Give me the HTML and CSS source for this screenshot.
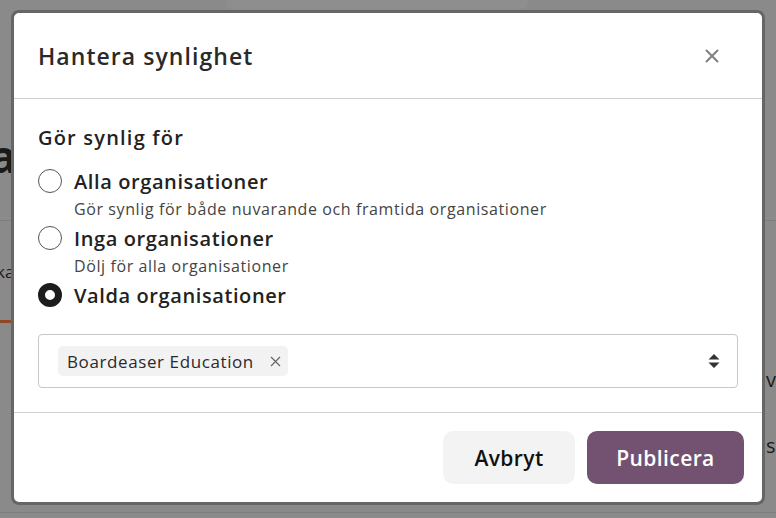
FILE: index.html
```html
<!DOCTYPE html>
<html lang="sv">
<head>
<meta charset="utf-8">
<link rel="stylesheet" href="styles.css">
</head>
<body>
<div class="page">
  <div class="bg-top"></div>
  <div class="bg-line l1"></div>
  <div class="bg-line l2"></div>
  <div class="bg-big">a</div>
  <div class="bg-small">ka</div>
  <div class="bg-orange"></div>
  <div class="bg-r1">v</div>
  <div class="bg-r2">s</div>
</div>
<div class="modal">
  <div class="modal-header">
    <h2 class="title">Hantera synlighet</h2>
    <button class="close" aria-label="Stäng">
      <svg width="14" height="14" viewBox="0 0 14 14"><path d="M1.5 1.5 L12.5 12.5 M12.5 1.5 L1.5 12.5" stroke="#808080" stroke-width="2" stroke-linecap="round"/></svg>
    </button>
  </div>
  <div class="modal-body">
    <div class="section-label">Gör synlig för</div>
    <div class="options">
      <div class="option">
        <span class="radio"></span>
        <span class="opt-label">Alla organisationer</span>
      </div>
      <div class="desc">Gör synlig för både nuvarande och framtida organisationer</div>
      <div class="option">
        <span class="radio"></span>
        <span class="opt-label">Inga organisationer</span>
      </div>
      <div class="desc">Dölj för alla organisationer</div>
      <div class="option">
        <span class="radio checked"></span>
        <span class="opt-label">Valda organisationer</span>
      </div>
    </div>
    <div class="select">
      <span class="chip">Boardeaser Education
        <svg class="chip-x" width="11" height="11" viewBox="0 0 11 11"><path d="M1 1 L10 10 M10 1 L1 10" stroke="#666" stroke-width="1.2"/></svg>
      </span>
      <svg class="caret" width="12" height="16" viewBox="0 0 12 16"><path d="M6 1 L11.5 6.5 H0.5 Z M0.5 9.5 H11.5 L6 15 Z" fill="#333"/></svg>
    </div>
  </div>
  <div class="modal-footer">
    <button class="btn btn-cancel">Avbryt</button>
    <button class="btn btn-primary">Publicera</button>
  </div>
</div>
</body>
</html>
```
FILE: styles.css
```css
* { box-sizing: border-box; }
html, body { margin: 0; padding: 0; }
body {
  width: 776px;
  height: 518px;
  overflow: hidden;
  background: #8a8a8a;
  font-family: "Open Sans", Lato, sans-serif;
  color: #222;
  position: relative;
}
.page { position: absolute; inset: 0; }
.bg-top { position: absolute; left: 226px; top: 0; width: 302px; height: 9px; background: #8e8e8e; border-radius: 0 0 6px 6px; }
.bg-line { position: absolute; height: 1px; background: #7e7e7e; }
.l1 { left: 0; right: 0; top: 220px; }
.l2 { left: 0; right: 0; top: 512px; }
.bg-big { position: absolute; left: -10px; top: 126px; font-size: 44px; font-weight: 700; color: #1a1a1a; }
.bg-small { position: absolute; left: -4px; top: 260px; font-size: 17px; color: #1a1a1a; }
.bg-orange { position: absolute; left: 0; top: 320px; width: 12px; height: 3px; background: #8b4a24; }
.bg-r1 { position: absolute; left: 766px; top: 366px; font-size: 20px; color: #1a1a1a; }
.bg-r2 { position: absolute; left: 766px; top: 432px; font-size: 20px; color: #1a1a1a; }

.modal {
  position: absolute;
  left: 11px;
  top: 10px;
  width: 754px;
  height: 495px;
  background: #fff;
  border: 3px solid #666;
  border-radius: 8px;
  display: flex;
  flex-direction: column;
}
.modal-header {
  height: 86px;
  border-bottom: 1px solid #d0d0d0;
  display: flex;
  align-items: center;
  justify-content: space-between;
  padding: 0 43px 0 24px;
}
.title { margin: 0; font-size: 23px; font-weight: 600; letter-spacing: 1.05px; color: #2a2a2a; }
.close { border: 0; background: none; padding: 0; display: flex; }
.modal-body {
  padding: 25px 24px 0 24px;
  height: 314px;
  border-bottom: 1px solid #d0d0d0;
}
.section-label { font-size: 20px; font-weight: 600; letter-spacing: 1.2px; color: #222; line-height: 28px; }
.options { margin-top: 13px; }
.option { display: flex; align-items: center; gap: 12px; height: 32px; }
.radio {
  width: 24px; height: 24px; border-radius: 50%;
  border: 1.5px solid #555; background: #fff; flex: none;
}
.radio.checked { border: 7px solid #1d1d1d; }
.opt-label { font-size: 20px; font-weight: 600; letter-spacing: 0.6px; color: #222; }
.desc { font-size: 16px; letter-spacing: 0.6px; color: #444; padding-left: 36px; height: 25px; line-height: 25px; }
.select {
  margin-top: 23px;
  height: 54px;
  border: 1px solid #c8c8c8;
  border-radius: 4px;
  display: flex;
  align-items: center;
  justify-content: space-between;
  padding: 0 17px 0 19px;
}
.chip {
  display: inline-flex; align-items: center; gap: 16px;
  background: #f2f2f2; border-radius: 5px;
  height: 30px; padding: 0 7px 0 9px;
  font-size: 17px; letter-spacing: 0.6px; color: #2a2a2a;
}
.modal-footer {
  flex: 1;
  display: flex;
  justify-content: flex-end;
  align-items: center;
  gap: 12px;
  padding: 0 18px 0 0;
}
.btn {
  height: 53px; border: 0; border-radius: 10px;
  font-family: inherit; font-size: 21px; font-weight: 600; letter-spacing: 0.4px;
}
.btn-cancel { width: 132px; background: #f3f3f3; color: #111; }
.btn-primary { width: 157px; background: #735170; color: #fff; }
```
